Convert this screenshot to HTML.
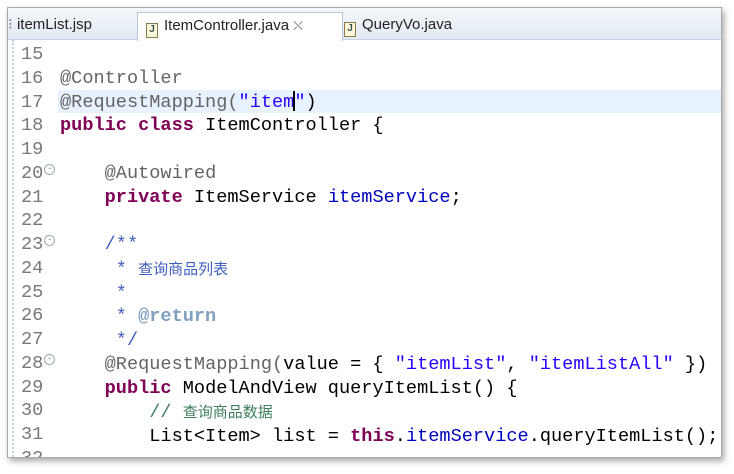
<!DOCTYPE html>
<html><head><meta charset="utf-8"><style>
body{margin:0;width:734px;height:474px;background:#fff;overflow:hidden;position:relative;font-family:"Liberation Sans","Noto Sans CJK SC",sans-serif}
.frame{position:absolute;left:7px;top:7px;width:713px;height:449px;border:1px solid #a9a9a9;box-shadow:2px 3px 6px rgba(0,0,0,.35);background:#fff;overflow:hidden}
.tabs{position:absolute;left:0;top:0;width:100%;height:31px;background:linear-gradient(#f4f7fb,#e3eaf3);border-bottom:1px solid #c9d3df}
.tab{position:absolute;top:4px;height:27px;font-size:15px;color:#222;line-height:26px}
.act{background:#fff;border:1px solid #b9c4d0;border-bottom:none;height:28px}
.ic{display:inline-block;width:10px;height:13px;border:1px solid #8a7a4a;background:#fff8d8;font-size:10px;line-height:12px;text-align:center;color:#355;vertical-align:-2px;margin-right:6px;font-weight:bold}
.code{position:absolute;left:4px;top:35px;right:0;bottom:0}
.bar{position:absolute;left:4px;top:32px;bottom:0;border-left:2px dotted #c5d3e6}
.ln{position:absolute;left:0;top:0;width:50px;padding-left:9px}
pre{margin:0;font-family:"Liberation Mono","Noto Sans CJK SC",monospace;font-size:18.6px;line-height:23.75px;white-space:pre}
.hl{position:absolute;left:46px;right:0;top:47px;height:23px;background:#e8f2fe}
.n{color:#787878}
.a{color:#646464}.k{color:#7f0055;font-weight:bold}.s{color:#2a00ff}.f{color:#0000c0}.j{color:#3f5fbf}.jt{color:#7f9fbf;font-weight:bold}.c{color:#3f7f5f}
.cjk{font-family:"Noto Sans CJK SC",sans-serif;font-size:15px}
.fold{display:inline-block;width:9px;height:9px;border:1px solid #9aa;border-radius:50%;font-size:9px;line-height:8px;color:#788;vertical-align:7px;margin-left:1px;text-align:center}
.cur{display:inline-block;width:2px;height:20px;background:#000;vertical-align:-4px;margin:0 -1px}
.txt{position:absolute;left:48px;top:0}
</style></head><body>
<div class="frame">
 <div class="tabs">
  <div class="tab" style="left:-4px;width:122px;padding-left:4px"><span style="color:#777">⁝</span> itemList.jsp</div>
  <div class="tab act" style="left:129px;width:196px;padding-left:8px"><span class="ic">J</span>ItemController.java <span style="color:#777;font-size:13px">⛌</span></div>
  <div class="tab" style="left:332px;padding-left:4px"><span class="ic">J</span>QueryVo.java</div>
 </div>
 <div class="bar"></div>
 <div class="code">
  <div class="hl"></div>
  <pre class="ln"><span class="n">15
16
17
18
19
20</span><span class="fold">-</span><span class="n">
21
22
23</span><span class="fold">-</span><span class="n">
24
25
26
27
28</span><span class="fold">-</span><span class="n">
29
30
31
32</span></pre>
  <pre class="txt">

<span class="a">@Controller</span>
<span class="a">@RequestMapping(</span><span class="s">"item<span class="cur"></span>"</span>)
<span class="k">public class</span> ItemController {

    <span class="a">@Autowired</span>
    <span class="k">private</span> ItemService <span class="f">itemService</span>;

    <span class="j">/**</span>
<span class="j">     * <span class="cjk">查询商品列表</span></span>
<span class="j">     *</span>
<span class="j">     * <span class="jt">@return</span></span>
<span class="j">     */</span>
    <span class="a">@RequestMapping(</span>value = { <span class="s">"itemList"</span>, <span class="s">"itemListAll"</span> })
    <span class="k">public</span> ModelAndView queryItemList() {
        <span class="c">// <span class="cjk">查询商品数据</span></span>
        List&lt;Item&gt; list = <span class="k">this</span>.<span class="f">itemService</span>.queryItemList();
</pre>
 </div>
</div>
</body></html>
